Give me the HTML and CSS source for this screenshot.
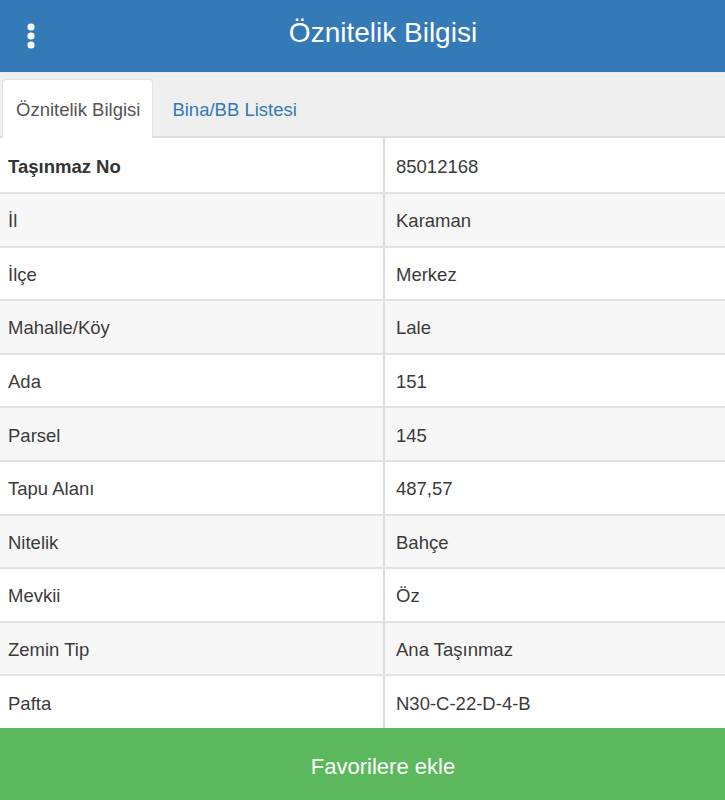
FILE: index.html
```html
<!DOCTYPE html>
<html lang="tr">
<head>
<meta charset="utf-8">
<title>Öznitelik Bilgisi</title>
<link rel="stylesheet" href="styles.css">
</head>
<body>
<div class="app">
  <header class="topbar">
    <button class="menu-btn" aria-label="Menü">
      <svg width="10" height="28" viewBox="0 0 10 28">
        <circle cx="5" cy="5" r="3.6" fill="#fff"/>
        <circle cx="5" cy="14" r="3.6" fill="#fff"/>
        <circle cx="5" cy="23" r="3.6" fill="#fff"/>
      </svg>
    </button>
    <h1 class="title">Öznitelik Bilgisi</h1>
    <span></span>
  </header>

  <nav class="tabs">
    <a class="tab active">Öznitelik Bilgisi</a>
    <a class="tab">Bina/BB Listesi</a>
  </nav>

  <div class="attrs">
    <div class="row"><div class="key strong">Taşınmaz No</div><div class="val">85012168</div></div>
    <div class="row"><div class="key">İl</div><div class="val">Karaman</div></div>
    <div class="row"><div class="key">İlçe</div><div class="val">Merkez</div></div>
    <div class="row"><div class="key">Mahalle/Köy</div><div class="val">Lale</div></div>
    <div class="row"><div class="key">Ada</div><div class="val">151</div></div>
    <div class="row"><div class="key">Parsel</div><div class="val">145</div></div>
    <div class="row"><div class="key">Tapu Alanı</div><div class="val">487,57</div></div>
    <div class="row"><div class="key">Nitelik</div><div class="val">Bahçe</div></div>
    <div class="row"><div class="key">Mevkii</div><div class="val">Öz</div></div>
    <div class="row"><div class="key">Zemin Tip</div><div class="val">Ana Taşınmaz</div></div>
    <div class="row"><div class="key">Pafta</div><div class="val">N30-C-22-D-4-B</div></div>
  </div>

  <button class="fav-btn">Favorilere ekle</button>
</div>
</body>
</html>
```

FILE: styles.css
```css
html, body {
  margin: 0;
  padding: 0;
  background: #fff;
}

.app {
  font-family: "Liberation Sans", Arial, sans-serif;
  color: #333;
}

/* top bar: the right gutter is narrower, so the title sits a little right of centre */
.topbar {
  height: 72px;
  background: #337ab7;
  display: grid;
  grid-template-columns: 62px 1fr 21px;
  align-items: center;
}

.menu-btn {
  background: none;
  border: 0;
  padding: 0;
  height: 72px;
  display: flex;
  align-items: center;
  justify-content: center;
  margin-top: -1px;
}

.title {
  margin: 0;
  text-align: center;
  color: #fff;
  font-weight: normal;
  font-size: 28px;
  line-height: 1;
  margin-top: -6px;
}

/* tabs */
.tabs {
  height: 66px;
  box-sizing: border-box;
  background: #efefef;
  border-top: 1px solid #e4e9ef;
  border-bottom: 2px solid #dedede;
  padding: 6px 0 0 2px;
  display: flex;
  align-items: stretch;
}

.tab {
  display: flex;
  align-items: center;
  padding: 1px 12px 0 13px;
  font-size: 18.5px;
  color: #337ab7;
  margin-bottom: -2px;
  border: 1px solid transparent;
  border-bottom: 0;
}

.tab.active {
  background: #fff;
  color: #555;
  border-color: #e2e2e2;
  border-radius: 4px 4px 0 0;
}

.tab + .tab {
  padding-left: 18px;
}

/* attribute list */
.attrs {
  display: flex;
  flex-direction: column;
}

.row {
  display: grid;
  grid-template-columns: 383px 1fr;
  height: 53.6px;
  box-sizing: border-box;
  border-top: 2px solid #e1e1e1;
  font-size: 18.5px;
}

.row:first-child {
  border-top: 0;
  height: 54px;
}

.row:nth-child(even) {
  background: #f7f7f7;
}

.key,
.val {
  display: flex;
  align-items: center;
  padding-top: 3px;
  color: #3b3b3b;
}

.key {
  padding-left: 8px;
}

.key.strong {
  font-weight: bold;
  color: #333;
}

.val {
  border-left: 2px solid #dcdcdc;
  padding-left: 11px;
}

/* bottom action */
.fav-btn {
  display: block;
  width: 100%;
  height: 72px;
  border: 0;
  background: #5cb85c;
  color: #fff;
  font-family: "Liberation Sans", Arial, sans-serif;
  font-size: 22px;
  padding: 6px 0 0 41px;
}
```
